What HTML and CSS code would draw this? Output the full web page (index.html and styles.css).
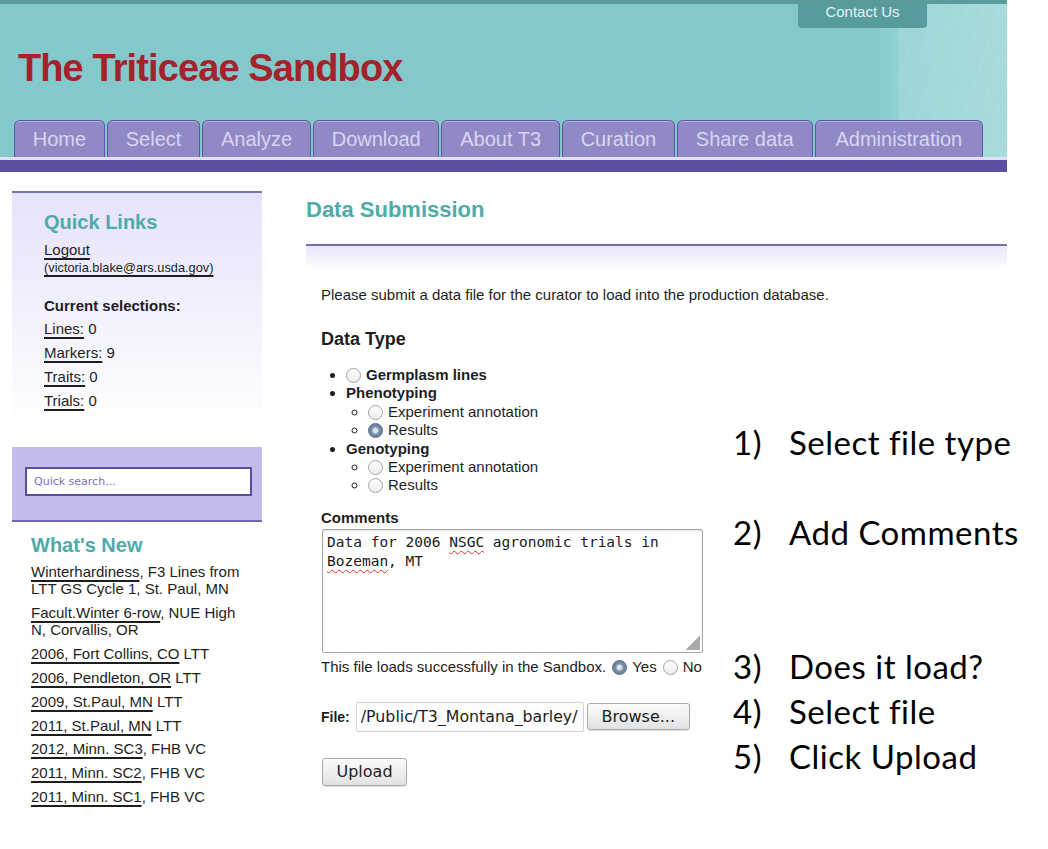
FILE: index.html
```html
<!DOCTYPE html>
<html lang="en">
<head>
<meta charset="utf-8">
<title>The Triticeae Sandbox - Data Submission</title>
<link rel="stylesheet" href="styles.css">
</head>
<body>
<div class="page">
  <header class="masthead">
    <a class="contact" href="#">Contact Us</a>
    <h1 class="site-title">The Triticeae Sandbox</h1>
    <nav class="tabs">
      <a class="tab" href="#">Home</a>
      <a class="tab" href="#">Select</a>
      <a class="tab" href="#">Analyze</a>
      <a class="tab" href="#">Download</a>
      <a class="tab" href="#">About T3</a>
      <a class="tab" href="#">Curation</a>
      <a class="tab" href="#">Share data</a>
      <a class="tab wide" href="#">Administration</a>
    </nav>
  </header>
  <div class="navrule"></div>

  <div class="layout">
    <aside class="sidebar">
      <section class="quick">
        <h2 class="side-title">Quick Links</h2>
        <div class="logout"><a class="link" href="#">Logout</a></div>
        <div class="email"><a class="link" href="#">(victoria.blake@ars.usda.gov)</a></div>
        <p class="sel-title">Current selections:</p>
        <ul class="sel-list">
          <li><a class="link" href="#">Lines:</a> 0</li>
          <li><a class="link" href="#">Markers:</a> 9</li>
          <li><a class="link" href="#">Traits:</a> 0</li>
          <li><a class="link" href="#">Trials:</a> 0</li>
        </ul>
      </section>
      <div class="search">
        <input class="search-input" type="text" placeholder="Quick search...">
      </div>
      <section class="news">
        <h2 class="side-title">What's New</h2>
        <ul class="news-list">
          <li><a class="link" href="#">Winterhardiness</a>, F3 Lines from<br>LTT GS Cycle 1, St. Paul, MN</li>
          <li><a class="link" href="#">Facult.Winter 6-row</a>, NUE High<br>N, Corvallis, OR</li>
          <li><a class="link" href="#">2006, Fort Collins, CO</a> LTT</li>
          <li><a class="link" href="#">2006, Pendleton, OR</a> LTT</li>
          <li><a class="link" href="#">2009, St.Paul, MN</a> LTT</li>
          <li><a class="link" href="#">2011, St.Paul, MN</a> LTT</li>
          <li><a class="link" href="#">2012, Minn. SC3</a>, FHB VC</li>
          <li><a class="link" href="#">2011, Minn. SC2</a>, FHB VC</li>
          <li><a class="link" href="#">2011, Minn. SC1</a>, FHB VC</li>
        </ul>
      </section>
    </aside>

    <main class="main">
      <h1 class="page-title">Data Submission</h1>
      <div class="rule"></div>
      <p class="intro">Please submit a data file for the curator to load into the production database.</p>
      <div class="content">
        <form class="form">
          <h3 class="section-title">Data Type</h3>
          <ul class="types">
            <li class="bold"><input class="radio" type="radio" name="t">Germplasm lines</li>
            <li class="bold">Phenotyping
              <ul class="subtypes">
                <li><input class="radio" type="radio" name="t">Experiment annotation</li>
                <li><input class="radio" type="radio" name="t" checked>Results</li>
              </ul>
            </li>
            <li class="bold">Genotyping
              <ul class="subtypes">
                <li><input class="radio" type="radio" name="t">Experiment annotation</li>
                <li><input class="radio" type="radio" name="t">Results</li>
              </ul>
            </li>
          </ul>
          <div class="comments-title">Comments</div>
          <div class="comments-box">Data for 2006 <span class="misspelled">NSGC</span> agronomic trials in <span class="misspelled">Bozeman</span>, MT</div>
          <div class="load-line">This file loads successfully in the Sandbox.<input class="radio inline" type="radio" name="l" checked>Yes<input class="radio inline" type="radio" name="l">No</div>
          <div class="file-row">
            <span class="file-label">File:</span>
            <input class="file-path" type="text" value="/Public/T3_Montana_barley/" readonly>
            <button class="btn browse" type="button">Browse...</button>
          </div>
          <button class="btn upload" type="button">Upload</button>
        </form>
        <ol class="notes">
          <li><span class="num">1)</span><span>Select file type</span></li>
          <li><span class="num">2)</span><span>Add Comments</span></li>
          <li><span class="num">3)</span><span>Does it load?</span></li>
          <li><span class="num">4)</span><span>Select file</span></li>
          <li><span class="num">5)</span><span>Click Upload</span></li>
        </ol>
      </div>
    </main>
  </div>
</div>
</body>
</html>
```

FILE: styles.css
```css
body {
  margin: 0;
  background: #ffffff;
  font-family: "Liberation Sans", Arial, sans-serif;
  color: #1e1e1e;
}

.page {
  width: 1007px;
}

/* ---------- masthead ---------- */
.masthead {
  position: relative;
  height: 153px;
  border-top: 4px solid #5b9b9c;
  display: flex;
  flex-direction: column;
  background:
    repeating-linear-gradient(108deg, rgba(255,255,255,0) 0 9px, rgba(255,255,255,0.09) 9px 10px, rgba(255,255,255,0) 10px 14px, rgba(255,255,255,0.06) 14px 15px) right top / 110px 100% no-repeat,
    linear-gradient(to right, #83c9cc 0, #83c9cc 880px, #88cccd 880px, #8fd0d1 897px, #9dd6d7 900px, #a8dbdb 1007px);
}

.contact {
  position: absolute;
  top: 0;
  left: 798px;
  width: 129px;
  height: 24px;
  background: #579c9d;
  border-radius: 0 0 4px 4px;
  color: #e6f4f4;
  font-size: 15px;
  line-height: 16px;
  text-align: center;
  text-decoration: none;
}

.site-title {
  margin: 42px 0 0 18px;
  font-size: 38px;
  line-height: 44px;
  font-weight: bold;
  letter-spacing: -0.9px;
  color: #a4232a;
}

.tabs {
  display: flex;
  gap: 2px;
  margin: 30px 0 0 14px;
}

.tab {
  box-sizing: border-box;
  height: 37px;
  padding: 0 17.8px;
  border: 1px solid #5d55a5;
  border-bottom: 0;
  border-radius: 6px 6px 0 0;
  background: #9189c6;
  box-shadow: inset 0 1px 0 #b8b2e5;
  color: #d8d5f1;
  font-size: 20px;
  line-height: 36px;
  text-decoration: none;
}

.tab.wide {
  padding: 0 20px;
}

.navrule {
  height: 12px;
  border-top: 3px solid #e2e0f3;
  background: #5a4fa4;
}

/* ---------- layout ---------- */
.layout {
  display: flex;
  align-items: flex-start;
}

.sidebar {
  width: 250px;
  margin: 19px 0 0 12px;
  flex: none;
}

.quick {
  border-top: 2px solid #7a74b4;
  background: linear-gradient(#e5e3fb, #ffffff 96%);
  padding: 17px 0 27px 32px;
}

.side-title {
  margin: 0;
  font-size: 20px;
  line-height: 24px;
  font-weight: bold;
  color: #4dabaa;
}

.link {
  color: #1e1e1e;
  text-decoration: underline;
  text-decoration-thickness: 1.5px;
  text-underline-offset: 3px;
}

.logout {
  margin-top: 7px;
  font-size: 15px;
  line-height: 17px;
}

.email {
  margin-top: 3px;
  font-size: 12.8px;
  line-height: 14px;
}

.sel-title {
  margin: 22px 0 0;
  font-size: 15px;
  line-height: 17px;
  font-weight: bold;
}

.sel-list {
  list-style: none;
  margin: 3px 0 0;
  padding: 0;
  font-size: 15px;
  line-height: 24px;
}

.search {
  margin-top: 7px;
  background: #c3bcec;
  border-bottom: 2px solid #6e67ad;
  padding: 20px 10px 24px 13px;
}

.search-input {
  display: block;
  box-sizing: border-box;
  width: 227px;
  height: 29px;
  margin: 0;
  border: 2px solid #564f9f;
  background: #ffffff;
  padding: 0 7px;
  font-family: "DejaVu Sans", sans-serif;
  font-size: 11px;
  color: #6e64b0;
}

.search-input::placeholder {
  color: #7a70b6;
}

.news {
  padding: 11px 0 0 19px;
}

.news-list {
  list-style: none;
  margin: 6px 0 0;
  padding: 0;
  width: 219px;
  font-size: 15px;
  line-height: 17.3px;
}

.news-list li {
  margin-bottom: 6.5px;
}

/* ---------- main ---------- */
.main {
  width: 701px;
  margin-left: 44px;
  flex: none;
}

.page-title {
  margin: 25px 0 0;
  font-size: 22px;
  line-height: 26px;
  font-weight: bold;
  color: #4dabaa;
}

.rule {
  margin-top: 21px;
  height: 24px;
  border-top: 2px solid #7670b2;
  background: linear-gradient(#e8e6fb, #ffffff);
}

.intro {
  margin: 16px 0 0 15px;
  font-size: 15px;
  line-height: 17px;
}

.content {
  display: flex;
  align-items: flex-start;
}

.form {
  flex: none;
  width: 412px;
  padding-left: 15px;
  margin: 0;
}

.section-title {
  margin: 26px 0 0;
  font-size: 18px;
  line-height: 21px;
  font-weight: bold;
}

.types {
  margin: 16px 0 0;
  padding-left: 25px;
  font-size: 15px;
  line-height: 18.4px;
}

.types .bold {
  font-weight: bold;
}

.subtypes {
  margin: 0;
  padding-left: 22px;
  list-style: circle;
  font-weight: normal;
}

.radio {
  appearance: none;
  -webkit-appearance: none;
  box-sizing: border-box;
  width: 15px;
  height: 15px;
  margin: 0 5px 0 0;
  border: 1px solid #a3a3a3;
  border-radius: 50%;
  background: linear-gradient(#ffffff, #ececec);
  vertical-align: -3px;
}

.radio:checked {
  border-color: #56677f;
  background: radial-gradient(circle, #dde6f0 0 2px, #9bb0c8 3px, #6a809d 5px, #7a8fab 7px);
}

.radio.inline {
  margin: 0 5px 0 6px;
}

.comments-title {
  margin-top: 14px;
  font-size: 15px;
  line-height: 17px;
  font-weight: bold;
}

.comments-box {
  position: relative;
  box-sizing: border-box;
  width: 381px;
  height: 124px;
  margin: 3px 0 0 1px;
  padding: 3px 4px;
  border: 1px solid #a6a6a6;
  border-radius: 2px;
  box-shadow: inset 0 1px 2px rgba(0, 0, 0, 0.12);
  font-family: "DejaVu Sans Mono", monospace;
  font-size: 14.5px;
  line-height: 19px;
  color: #1a1a1a;
}

.comments-box::after {
  content: "";
  position: absolute;
  right: 2px;
  bottom: 2px;
  width: 15px;
  height: 15px;
  background: linear-gradient(135deg, transparent 50%, #a9a9a9 50%);
}

.misspelled {
  text-decoration: underline wavy #e0302a;
  text-decoration-thickness: 1px;
  text-underline-offset: 3px;
}

.load-line {
  margin-top: 5px;
  font-size: 15px;
  line-height: 17px;
  white-space: nowrap;
}

.file-row {
  display: flex;
  align-items: center;
  margin-top: 27px;
}

.file-label {
  font-size: 14px;
  font-weight: bold;
  margin-right: 6px;
}

.file-path {
  box-sizing: border-box;
  width: 228px;
  height: 30px;
  margin: 0;
  padding: 0 4px;
  border: 1px solid #d2d2d2;
  border-radius: 2px;
  background: #fdfdfd;
  font-family: "DejaVu Sans", sans-serif;
  font-size: 15.8px;
  color: #222222;
}

.btn {
  box-sizing: border-box;
  margin: 0;
  padding: 0;
  border: 1px solid #a9a9a9;
  border-radius: 3px;
  background: linear-gradient(#fbfbfb, #e2e2e2);
  box-shadow: 0 1px 1px rgba(0, 0, 0, 0.12);
  font-family: "DejaVu Sans", sans-serif;
  font-size: 16px;
  color: #222222;
}

.browse {
  width: 103px;
  height: 27px;
  margin-left: 3px;
}

.upload {
  display: block;
  width: 85px;
  height: 28px;
  margin: 26px 0 0 1px;
}

/* ---------- annotations ---------- */
.notes {
  list-style: none;
  margin: 0;
  padding: 117px 0 0 0;
  font-family: Lato, "Open Sans", sans-serif;
  font-size: 33px;
  letter-spacing: 0.5px;
  line-height: 45px;
  color: #000000;
}

.notes li {
  display: flex;
  white-space: nowrap;
}

.notes li:nth-child(2) {
  margin-top: 45px;
}

.notes li:nth-child(3) {
  margin-top: 89px;
}

.num {
  width: 56px;
  flex: none;
}
```
